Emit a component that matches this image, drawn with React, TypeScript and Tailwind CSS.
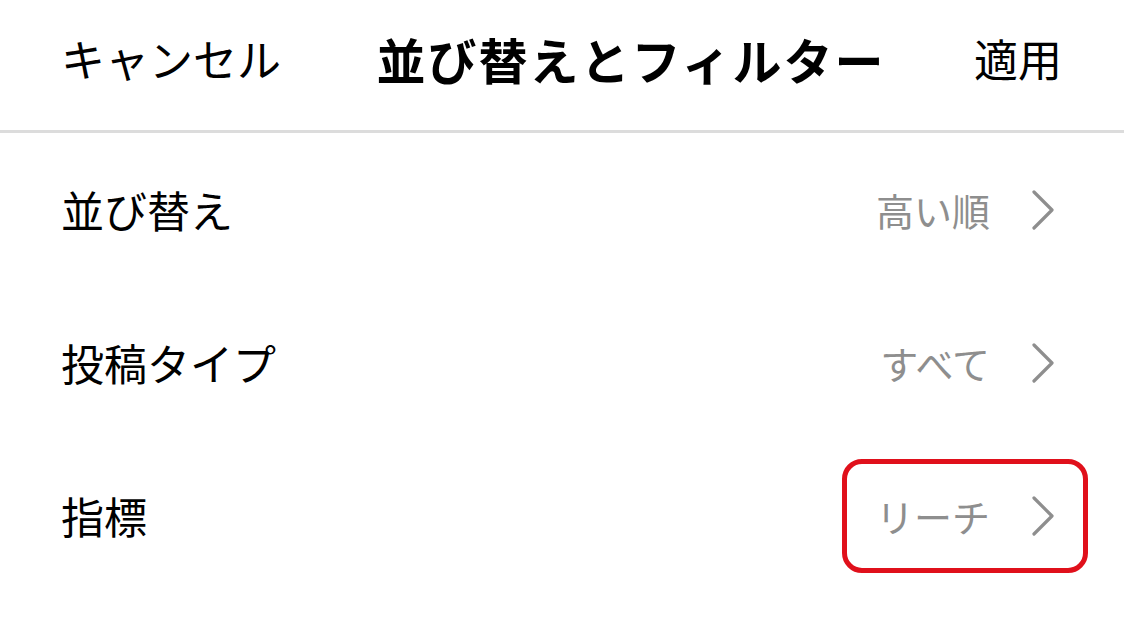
import React from 'react';

function Chevron() {
  return (
    <svg width="22" height="40" viewBox="0 0 22 40" fill="none" className="shrink-0">
      <path d="M2 2 L20 20 L2 38" stroke="#8e8e8e" strokeWidth="3.2" strokeLinecap="round" strokeLinejoin="round" />
    </svg>
  );
}

export default function App() {
  const rows = [
    { label: '並び替え', value: '高い順', highlight: false },
    { label: '投稿タイプ', value: 'すべて', highlight: false },
    { label: '指標', value: 'リーチ', highlight: true },
  ];

  return (
    <div
      className="w-[1124px] h-[629px] bg-white text-black overflow-hidden"
      style={{ fontFamily: '"Noto Sans CJK JP", "Noto Sans", sans-serif' }}
    >
      {/* Header */}
      <div className="h-[130px] flex items-center justify-between pl-[61px] pr-[62px] pb-[14px]">
        <span className="text-[44px] leading-none">キャンセル</span>
        <span className="text-[49px] font-bold leading-none tracking-[2px] pl-[7px]">並び替えとフィルター</span>
        <span className="text-[44px] leading-none">適用</span>
      </div>
      <div className="h-[3px] bg-[#dcdcdc]" />

      {/* Rows */}
      <div className="flex flex-col">
        {rows.map((row, i) => (
          <div key={i} className="h-[153px] flex items-center justify-between pl-[61px] pr-[70px]">
            <span className="text-[43px] leading-none">{row.label}</span>
            <div
              className={
                row.highlight
                  ? 'flex items-center gap-[42px] h-[114px] -mr-[34px] pl-[29px] pr-[29px] border-[5px] border-[#e0101b] rounded-[20px]'
                  : 'flex items-center gap-[42px]'
              }
            >
              <span className="text-[38px] leading-none text-[#8e8e8e]">{row.value}</span>
              <Chevron />
            </div>
          </div>
        ))}
      </div>
    </div>
  );
}
